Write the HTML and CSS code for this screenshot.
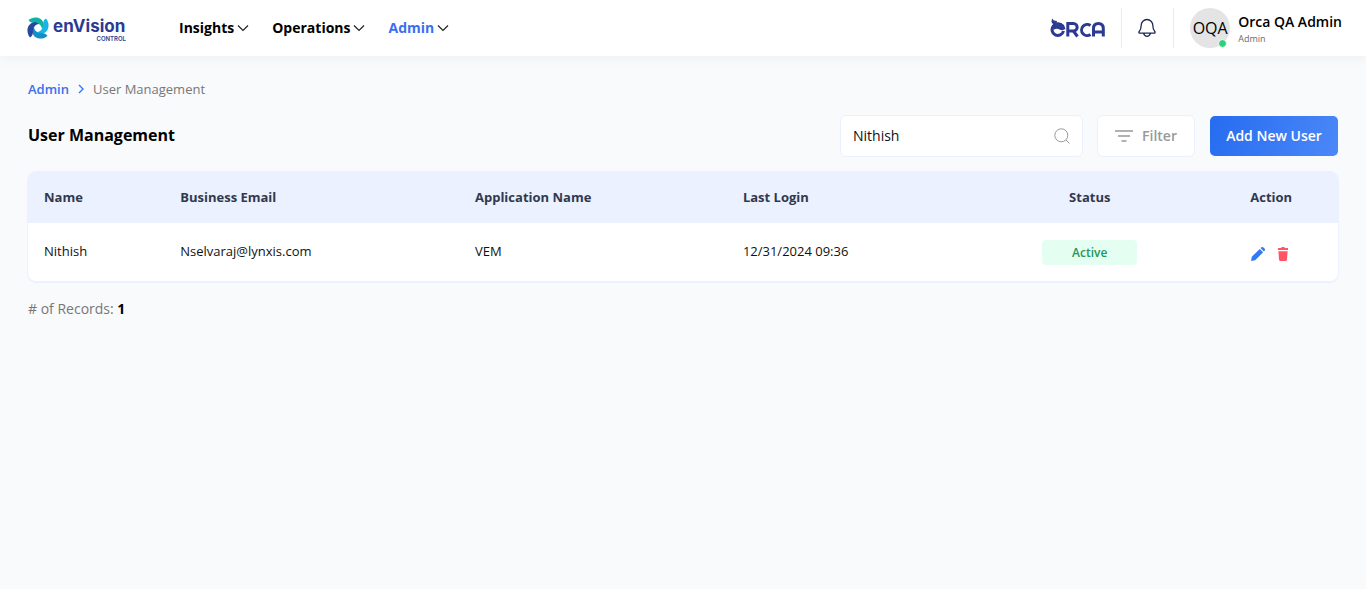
FILE: index.html
```html
<!DOCTYPE html>
<html lang="en">
<head>
<meta charset="utf-8">
<title>User Management</title>
<link rel="stylesheet" href="styles.css">
</head>
<body>
<header class="topbar">
  <a class="brand" href="#" aria-label="enVision Control">
    <svg class="brand-mark" viewBox="0 0 44 46" aria-hidden="true">
      <defs><path id="arm" d="M3 7C12-1 29 0 33 13c1 5 0 9-3 12C29 17 23 13 15 13 9 13 5 11 3 7z"/></defs>
      <use href="#arm" fill="#10b3a3"/>
      <use href="#arm" fill="#19b5e6" transform="rotate(90 22 23)"/>
      <use href="#arm" fill="#128fc9" transform="rotate(180 22 23)"/>
      <use href="#arm" fill="#28479e" transform="rotate(270 22 23)"/>
    </svg>
    <span class="brand-text">
      <span class="brand-name">enVision</span>
      <span class="brand-sub">CONTROL</span>
    </span>
  </a>
  <nav class="nav">
    <a href="#">Insights <svg class="caret" viewBox="0 0 12 12"><path d="M1 3.500l5 5 5-5"/></svg></a>
    <a href="#">Operations <svg class="caret" viewBox="0 0 12 12"><path d="M1 3.500l5 5 5-5"/></svg></a>
    <a class="current" href="#">Admin <svg class="caret" viewBox="0 0 12 12"><path d="M1 3.500l5 5 5-5"/></svg></a>
  </nav>
  <div class="account">
    <svg class="orca" viewBox="0 0 56 20" role="img" aria-label="ORCA">
      <g fill="none" stroke="#2b3a92" stroke-width="3">
        <path d="M12.500 8.200A5.800 5.800 0 1 0 13.500 13"/>
        <path d="M17.800 18.500V5.500h5.600a2.900 2.900 0 0 1 0 7.500h-5.600M23 12.500l4.500 6"/>
        <path d="M40.500 7.500a5.600 5.600 0 1 0 0 9"/>
        <path d="M43.500 18.500v-8q0-5 4.900-5t4.900 5v8M43.500 14h9.800"/>
      </g>
      <path d="M2 .5l2 2 3 .5-.5 3-3 1-2-3zM3 8q5-6 11-1l1.500 4q-3 2-6 .5-3-1.500-6 .5z" fill="#2b3a92"/>
    </svg>
    <button class="bell" aria-label="Notifications">
      <svg viewBox="0 0 20 20"><path d="M10 1.500a5.800 5.800 0 0 0-5.800 5.800c0 3.700-.7 4.700-2 6.200-.7.900-.2 1.700.7 1.700h14.200c.9 0 1.400-.8.700-1.700-1.300-1.500-2-2.500-2-6.200A5.800 5.800 0 0 0 10 1.500zM6.500 15.300q1 3 3.500 3t3.500-3"/></svg>
    </button>
    <div class="profile">
      <span class="avatar">OQA<i class="online"></i></span>
      <span class="who"><span class="who-name">Orca QA Admin</span><span class="who-role">Admin</span></span>
    </div>
  </div>
</header>
<main class="page">
  <nav class="crumbs" aria-label="Breadcrumb">
    <a href="#">Admin</a>
    <svg class="crumb-sep" viewBox="0 0 8 10"><path d="M2 1l4 4-4 4"/></svg>
    <span>User Management</span>
  </nav>
  <div class="toolbar">
    <h1>User Management</h1>
    <div class="search">
      <input type="text" value="Nithish" aria-label="Search users">
      <svg viewBox="0 0 16 16"><circle cx="7.300" cy="7.300" r="6.500"/><path d="M12 12l3.500 3.500"/></svg>
    </div>
    <button class="filter">
      <svg viewBox="0 0 18 14"><path d="M0 2h18M3 7h12M6.500 12h5"/></svg>Filter
    </button>
    <button class="add">Add New User</button>
  </div>
  <div class="card">
    <table>
      <colgroup><col class="c-name"><col class="c-email"><col class="c-app"><col class="c-login"><col class="c-status"><col class="c-action"></colgroup>
      <thead>
        <tr><th>Name</th><th>Business Email</th><th>Application Name</th><th>Last Login</th><th class="mid">Status</th><th class="mid">Action</th></tr>
      </thead>
      <tbody>
        <tr>
          <td>Nithish</td><td>Nselvaraj@lynxis.com</td><td>VEM</td><td>12/31/2024 09:36</td>
          <td class="mid"><span class="badge">Active</span></td>
          <td class="mid">
            <div class="actions">
              <button aria-label="Edit user"><svg viewBox="0 0 16 16"><path fill="#3578f6" d="M1 15l.8-4.200L9.700 2.900l3.400 3.400-7.900 7.900zM10.500 2.100l.9-.8q.9-.7 1.800 0l1.500 1.500q.8.900 0 1.800l-.8.900z"/></svg></button>
              <button aria-label="Delete user"><svg viewBox="0 0 16 16"><path fill="#ff5565" d="M3 2h3l.8-1h2.400l.8 1h3v2H3zM3.400 5.200h9.200l-.6 8.300q-.2 1.500-1.600 1.500H5.600q-1.400 0-1.600-1.500z"/></svg></button>
            </div>
          </td>
        </tr>
      </tbody>
    </table>
  </div>
  <p class="records"># of Records: <b>1</b></p>
</main>
</body>
</html>
```
FILE: styles.css
```css
* { box-sizing: border-box; }
body {
  margin: 0;
  min-height: 100vh;
  background: #f9fafc;
  color: #000;
  font: 14px/20px "Open Sans", sans-serif;
}
a { text-decoration: none; color: inherit; }
button { font: inherit; padding: 0; border: 0; background: none; cursor: pointer; }
svg { display: block; flex: none; }

.topbar {
  display: flex;
  align-items: center;
  height: 56px;
  padding: 0 24px 0 27px;
  background: #fff;
  box-shadow: 0 2px 12px rgba(0, 0, 0, 0.05);
}
.brand { display: flex; align-items: center; gap: 4px; width: 152px; }
.brand-mark { width: 22px; height: 24px; }
.brand-text { display: flex; flex-direction: column; width: 73px; padding-top: 4px; color: #2b3a92; }
.brand-name { font: 700 17px/18px Inter, sans-serif; }
.brand-sub { align-self: flex-end; font: 600 6px/8px Inter, sans-serif; }
.nav { display: flex; gap: 23px; font-weight: 700; }
.nav a { display: flex; align-items: center; gap: 3px; }
.nav .current { color: #3b6ff0; }
.caret { width: 12px; height: 12px; fill: none; stroke: #222; stroke-width: 1.2; }

.account { display: flex; align-items: center; margin-left: auto; }
.orca { width: 56px; height: 20px; margin-right: 15px; }
.bell {
  display: flex;
  align-items: center;
  width: 53px;
  height: 40px;
  padding-left: 15px;
  border: solid #e8eaf5;
  border-width: 0 1px;
}
.bell svg { width: 20px; height: 20px; fill: none; stroke: #1f2a55; stroke-width: 1.3; }
.profile { display: flex; align-items: center; gap: 8px; padding-left: 16px; }
.avatar {
  position: relative;
  width: 40px;
  height: 40px;
  border-radius: 50%;
  background: #e4e4e4;
  font-size: 16px;
  line-height: 40px;
  text-align: center;
}
.online {
  position: absolute;
  right: 3px;
  bottom: 0;
  width: 9px;
  height: 9px;
  border: 1px solid #fff;
  border-radius: 50%;
  background: #2fd07a;
}
.who { display: flex; flex-direction: column; padding-top: 4px; }
.who-name { font-weight: 600; line-height: 18px; }
.who-role { color: #6b6b6b; font-size: 9px; line-height: 16px; }

.page { padding: 23px 28px; }
.crumbs { display: flex; align-items: center; gap: 8px; font-size: 13px; color: #777; }
.crumbs a { color: #3b6ff0; font-weight: 600; }
.crumb-sep { width: 8px; height: 10px; fill: none; stroke: #3578f6; stroke-width: 1.4; }

.toolbar { display: flex; align-items: center; margin: 16px 0 14px; }
h1 { flex: 1; margin: 0; padding-bottom: 2px; font-size: 16px; line-height: 24px; font-weight: 700; }
.search {
  display: flex;
  align-items: center;
  width: 243px;
  height: 42px;
  margin-right: 14px;
  padding: 0 12px;
  border: 1px solid #ebf1fe;
  border-radius: 6px;
  background: #fff;
}
.search input { flex: 1; min-width: 0; padding: 0; border: 0; outline: 0; background: none; font: inherit; color: #111; }
.search svg { width: 16px; height: 16px; fill: none; stroke: #999; }
.filter {
  display: flex;
  align-items: center;
  justify-content: center;
  gap: 9px;
  width: 98px;
  height: 42px;
  margin-right: 15px;
  border: 1px solid #ebf1fe;
  border-radius: 6px;
  background: #fff;
  color: #999;
  font-weight: 600;
}
.filter svg { width: 18px; height: 14px; stroke: #999; stroke-width: 1.5; }
.add {
  width: 128px;
  height: 40px;
  border-radius: 5px;
  background: linear-gradient(110deg, #266cf0, #4b88f8);
  color: #fff;
  font-weight: 600;
}

.card {
  overflow: hidden;
  border-radius: 8px;
  background: #fff;
  box-shadow: 0 1px 1px 1px #ebf1fe;
}
table { width: 100%; table-layout: fixed; border-collapse: collapse; font-size: 13px; }
.c-name { width: 10.4%; }
.c-email { width: 22.5%; }
.c-app { width: 20.45%; }
.c-login { width: 18.95%; }
.c-status { width: 17.5%; }
.c-action { width: 10.2%; }
th, td { padding: 0 16px; text-align: left; }
th { height: 52px; background: #ebf1fe; color: #30394f; font-weight: 700; }
td { height: 58px; padding-bottom: 2px; color: #111; }
th.mid, td.mid { padding-bottom: 0; text-align: center; }
.badge {
  display: inline-block;
  width: 95px;
  border-radius: 4px;
  background: #e5fef2;
  color: #24965a;
  font-size: 12px;
  font-weight: 600;
  line-height: 25px;
}
.actions { display: flex; justify-content: center; gap: 9px; padding: 4px 2px 0 0; }
.actions svg { width: 16px; height: 16px; }
.records { margin: 18px 0 0; color: #777; }
.records b { color: #000; }
```
